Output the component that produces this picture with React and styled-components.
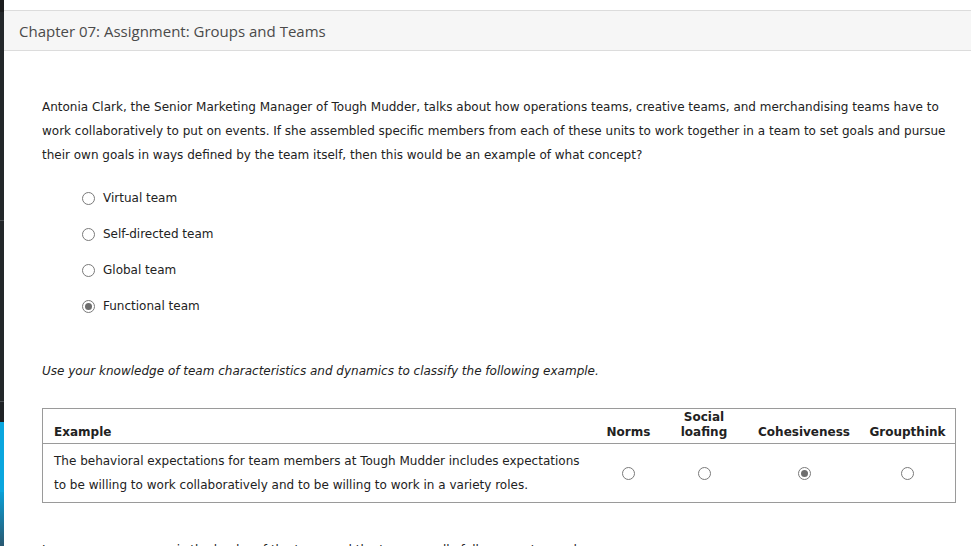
import React from 'react';
import styled, { createGlobalStyle } from 'styled-components';

// STYLES

const GlobalStyle = createGlobalStyle`
    html, body {
        margin: 0;
        padding: 0;
        background: #ffffff;
    }
    body {
        font-family: "DejaVu Sans", Verdana, sans-serif;
        color: #222;
        overflow: hidden;
    }
`;

const Page = styled.div`
    display: flex;
    width: 971px;
    height: 546px;
    overflow: hidden;
`;

const SideStrip = styled.div`
    flex: 0 0 4px;
    display: flex;
    flex-direction: column;
`;

const StripPart = styled.div`
    height: ${p => p.h}px;
    flex: ${p => (p.grow ? '1' : 'none')};
    background: ${p => p.bg};
    border-bottom: ${p => (p.line ? '1px solid #4a4e52' : 'none')};
`;

const Main = styled.div`
    flex: 1;
    padding-top: 10px;
`;

const TitleBar = styled.header`
    background: #f6f6f6;
    border-top: 1px solid #dcdcdc;
    border-bottom: 1px solid #dcdcdc;
    height: 39px;
    display: flex;
    align-items: center;
    padding-left: 15px;
    font-family: "Open Sans", sans-serif;
    font-size: 15px;
    color: #4a4a4a;
`;

const Content = styled.div`
    padding: 44px 15px 0 38px;
`;

const Question = styled.p`
    margin: 0;
    font-size: 12px;
    line-height: 24px;
    color: #222;
`;

const Options = styled.div`
    display: flex;
    flex-direction: column;
    margin: 13px 0 0 40px;
`;

const Option = styled.label`
    display: flex;
    align-items: center;
    height: 36px;
    font-size: 12px;
    color: #222;
    gap: 8px;
`;

const Radio = styled.span`
    box-sizing: border-box;
    width: 13px;
    height: 13px;
    border-radius: 50%;
    border: 1px solid #7a7a7a;
    background: #fff;
    display: inline-flex;
    align-items: center;
    justify-content: center;
    flex: none;

    &::after {
        content: '';
        width: 7px;
        height: 7px;
        border-radius: 50%;
        background: ${p => (p.checked ? '#6d6d6d' : 'transparent')};
    }
`;

const Instruction = styled.p`
    margin: 35px 0 0 0;
    font-size: 12px;
    font-style: italic;
    line-height: 24px;
    color: #222;
`;

const Table = styled.div`
    margin-top: 25px;
    width: 914px;
    box-sizing: border-box;
    border: 1px solid #9a9a9a;
    display: grid;
    grid-template-columns: 554px 63px 88px 112px 1fr;
`;

const HeadCell = styled.div`
    box-sizing: border-box;
    height: 35px;
    display: flex;
    align-items: flex-end;
    justify-content: ${p => (p.left ? 'flex-start' : 'center')};
    text-align: ${p => (p.left ? 'left' : 'center')};
    padding: 0 ${p => (p.left ? '11px' : '0')} 3px;
    font-size: 12px;
    font-weight: bold;
    line-height: 15px;
    color: #222;
    border-bottom: 1px solid #9a9a9a;
`;

const BodyCell = styled.div`
    box-sizing: border-box;
    height: 58px;
    display: flex;
    align-items: center;
    justify-content: ${p => (p.left ? 'flex-start' : 'center')};
    padding: 0 ${p => (p.left ? '11px' : '0')};
    font-size: 12px;
    line-height: 24px;
    color: #222;
`;

const NextPara = styled.p`
    margin: 35px 0 0 0;
    font-size: 12px;
    line-height: 24px;
    color: #222;
`;

// DATA

const options = [
    { label: 'Virtual team', checked: false },
    { label: 'Self-directed team', checked: false },
    { label: 'Global team', checked: false },
    { label: 'Functional team', checked: true },
];

const columns = [
    { label: 'Norms', checked: false },
    { label: <>Social<br />loafing</>, checked: false },
    { label: 'Cohesiveness', checked: true },
    { label: 'Groupthink', checked: false },
];

// COMPONENT

export default function App() {
    return (
        <Page>
            <GlobalStyle />
            <SideStrip>
                <StripPart h={12} bg="#1b1c1d" />
                <StripPart h={208} bg="#23272a" line />
                <StripPart h={180} bg="#23272a" line />
                <StripPart h={20} bg="#1f2225" />
                <StripPart h={70} bg="#0aa6de" />
                <StripPart grow bg="linear-gradient(#0a9fd6, #2a5870)" />
            </SideStrip>
            <Main>
                <TitleBar>Chapter 07: Assignment: Groups and Teams</TitleBar>
                <Content>
                    <Question>
                        Antonia Clark, the Senior Marketing Manager of Tough Mudder, talks about how operations teams, creative teams, and merchandising teams have to work collaboratively to put on events. If she assembled specific members from each of these units to work together in a team to set goals and pursue their own goals in ways defined by the team itself, then this would be an example of what concept?
                    </Question>
                    <Options>
                        {options.map(o => (
                            <Option key={o.label}>
                                <Radio checked={o.checked} />
                                {o.label}
                            </Option>
                        ))}
                    </Options>
                    <Instruction>
                        Use your knowledge of team characteristics and dynamics to classify the following example.
                    </Instruction>
                    <Table>
                        <HeadCell left>Example</HeadCell>
                        {columns.map((c, i) => (
                            <HeadCell key={i}>{c.label}</HeadCell>
                        ))}
                        <BodyCell left>
                            The behavioral expectations for team members at Tough Mudder includes expectations to be willing to work collaboratively and to be willing to work in a variety roles.
                        </BodyCell>
                        {columns.map((c, i) => (
                            <BodyCell key={i}>
                                <Radio checked={c.checked} />
                            </BodyCell>
                        ))}
                    </Table>
                    <NextPara>
                        In groups, one person is the leader of the team and the team usually follows a set agenda.
                    </NextPara>
                </Content>
            </Main>
        </Page>
    );
}
